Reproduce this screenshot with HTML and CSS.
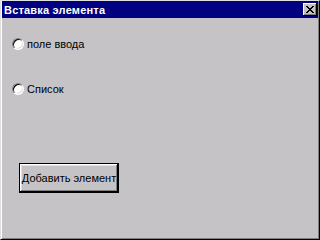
FILE: index.html
```html
<!DOCTYPE html>
<html lang="ru">
<head>
<meta charset="utf-8">
<title>Вставка элемента</title>
<link rel="stylesheet" href="styles.css">
</head>
<body>
<div class="window">
  <div class="titlebar">
    <span class="title">Вставка элемента</span>
    <span class="close">
      <svg width="8" height="7" viewBox="0 0 8 7"><path d="M0 0h2v1h1v1h2v-1h1v-1h2v1h-1v1h-1v1h-1v1h1v1h1v1h1v1h-2v-1h-1v-1h-2v1h-1v1h-2v-1h1v-1h1v-1h1v-1h-1v-1h-1v-1h-1z" fill="#000"/></svg>
    </span>
  </div>
  <div class="content">
    <label class="option"><span class="radio"></span><span class="label">поле ввода</span></label>
    <label class="option second"><span class="radio"></span><span class="label">Список</span></label>
    <div class="button">Добавить элемент</div>
  </div>
</div>
</body>
</html>
```
FILE: styles.css
```css
html, body {
  margin: 0;
  padding: 0;
  background: #c6c3c6;
  overflow: hidden;
}
.window {
  width: 100vw;
  height: 100vh;
  box-sizing: border-box;
  background: #c6c3c6;
  border-style: solid;
  border-width: 1px;
  border-color: #dfdfdf #000 #000 #dfdfdf;
  padding: 0 1px 1px 1px;
  box-shadow: inset 1px 0 #fff, inset -1px -1px #808080;
  font-family: "Liberation Sans", Arial, sans-serif;
  font-size: 11px;
  color: #000;
  display: flex;
  flex-direction: column;
}
.titlebar {
  height: 17px;
  background: #000080;
  display: flex;
  align-items: center;
  justify-content: space-between;
  padding-left: 2px;
  padding-right: 1px;
}
.title {
  color: #fff;
  font-weight: bold;
  font-size: 11px;
  letter-spacing: 0.2px;
}
.close {
  width: 14px;
  height: 13px;
  box-sizing: border-box;
  background: #c6c3c6;
  box-shadow: inset -1px -1px #000, inset 1px 1px #fff, inset -2px -2px #808080;
  display: flex;
  align-items: center;
  justify-content: center;
  padding-bottom: 1px;
}
.close svg { display: block; }
.content {
  padding: 20px 0 0 10px;
  display: flex;
  flex-direction: column;
  align-items: flex-start;
}
.option {
  display: flex;
  align-items: center;
  height: 12px;
}
.option.second {
  margin-top: 33px;
}
.radio {
  width: 12px;
  height: 12px;
  box-sizing: border-box;
  border-radius: 50%;
  background: #fff;
  border: 1px solid;
  border-color: #808080 #fff #fff #808080;
  box-shadow: inset 1px 1px #000, inset -1px -1px #dfdfdf;
}
.label {
  margin-left: 3px;
}
.button {
  margin-top: 68px;
  margin-left: 7px;
  width: 100px;
  height: 30px;
  box-sizing: border-box;
  border: 1px solid #000;
  box-shadow: inset -1px -1px #000, inset 1px 1px #fff, inset -2px -2px #808080, inset 2px 2px #dfdfdf;
  display: flex;
  align-items: center;
  justify-content: center;
  white-space: nowrap;
}
```
